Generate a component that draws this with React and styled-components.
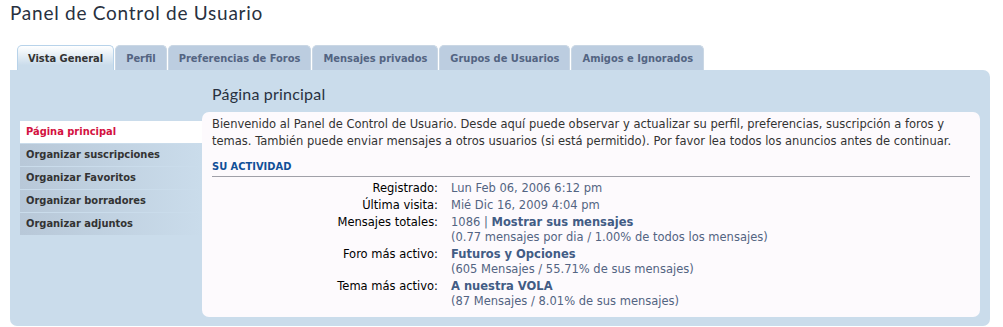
import React from 'react';
import styled, { createGlobalStyle } from 'styled-components';

const GlobalStyle = createGlobalStyle`
	body {
		margin: 0;
		background: #fff;
		font-family: 'DejaVu Sans', Verdana, sans-serif;
		font-size: 10px;
		color: #333;
	}
`;

const tabs = ['Vista General', 'Perfil', 'Preferencias de Foros', 'Mensajes privados', 'Grupos de Usuarios', 'Amigos e Ignorados'];
const menu = ['Página principal', 'Organizar suscripciones', 'Organizar Favoritos', 'Organizar borradores', 'Organizar adjuntos'];

const App = () => {
	return (
		<Page>
			<GlobalStyle />
			<Title>Panel de Control de Usuario</Title>
			<TabBar>
				{tabs.map((t, i) => (
					<Tab key={t} active={i === 0}>{t}</Tab>
				))}
			</TabBar>
			<Panel>
				<Heading>Página principal</Heading>
				<Menu>
					{menu.map((m, i) => (
						<MenuItem key={m} active={i === 0}>{m}</MenuItem>
					))}
				</Menu>
				<Content>
					<Intro>
						Bienvenido al Panel de Control de Usuario. Desde aquí puede observar y actualizar su perfil, preferencias, suscripción a foros y
						temas. También puede enviar mensajes a otros usuarios (si está permitido). Por favor lea todos los anuncios antes de continuar.
					</Intro>
					<SectionTitle>SU ACTIVIDAD</SectionTitle>
					<Stats>
						<dt>Registrado:</dt>
						<dd>Lun Feb 06, 2006 6:12 pm</dd>
						<dt>Última visita:</dt>
						<dd>Mié Dic 16, 2009 4:04 pm</dd>
						<dt>Mensajes totales:</dt>
						<dd>
							1086 | <StatLink>Mostrar sus mensajes</StatLink>
							<br />(0.77 mensajes por dia / 1.00% de todos los mensajes)
						</dd>
						<dt>Foro más activo:</dt>
						<dd>
							<StatLink>Futuros y Opciones</StatLink>
							<br />(605 Mensajes / 55.71% de sus mensajes)
						</dd>
						<dt>Tema más activo:</dt>
						<dd>
							<StatLink>A nuestra VOLA</StatLink>
							<br />(87 Mensajes / 8.01% de sus mensajes)
						</dd>
					</Stats>
				</Content>
			</Panel>
		</Page>
	);
};

const Page = styled.div`
	padding: 0 13px 0 10px;
`;

const Title = styled.h2`
	font-family: Lato, 'Liberation Sans', sans-serif;
	font-weight: normal;
	font-size: 19px;
	letter-spacing: 0.75px;
	line-height: 26px;
	color: #28313f;
	margin: 0;
	height: 45px;
`;

const TabBar = styled.ul`
	display: flex;
	list-style: none;
	margin: 0;
	padding: 0 0 0 7px;
	height: 25px;
`;

const Tab = styled.li`
	display: flex;
	align-items: center;
	padding: 0 10px;
	margin-right: 1px;
	border-radius: 5px 5px 0 0;
	border: 1px solid ${(p) => (p.active ? '#b8d3ea' : '#cad7e4')};
	border-bottom: none;
	background: ${(p) => (p.active ? 'linear-gradient(#ffffff, #cadceb 80%)' : '#bccde0')};
	font-family: 'DejaVu Sans Condensed', 'DejaVu Sans', sans-serif;
	font-size: 11px;
	font-weight: bold;
	color: ${(p) => (p.active ? '#333' : '#536482')};
	white-space: nowrap;
`;

const Panel = styled.div`
	display: grid;
	grid-template-columns: 182px 1fr;
	grid-template-rows: auto auto;
	background: #cadceb;
	border-radius: 0 7px 7px 7px;
	padding: 0 10px 9px 10px;
`;

const Heading = styled.h2`
	grid-column: 2;
	margin: 0;
	padding: 13px 0 0 10px;
	height: 29px;
	font-family: Lato, 'Liberation Sans', sans-serif;
	font-weight: normal;
	font-size: 16px;
	letter-spacing: 0.2px;
	line-height: 22px;
	color: #28313f;
`;

const Menu = styled.ul`
	grid-column: 1;
	list-style: none;
	margin: 9px 0 0;
	padding: 0;
`;

const MenuItem = styled.li`
	height: 22px;
	line-height: 22px;
	padding-left: 6px;
	margin-bottom: 1px;
	font-family: 'DejaVu Sans Condensed', 'DejaVu Sans', sans-serif;
	font-size: 11px;
	font-weight: bold;
	color: ${(p) => (p.active ? '#d31141' : '#333')};
	background: ${(p) => (p.active ? '#fff' : 'linear-gradient(to right, #b8c8d8, #cadceb)')};
	white-space: nowrap;
`;

const Content = styled.div`
	grid-column: 2;
	background: #fdfafd;
	border-radius: 7px;
	padding: 4px 10px 8px;
`;

const Intro = styled.p`
	margin: 0;
	font-size: 11.5px;
	line-height: 17px;
	color: #333;
`;

const SectionTitle = styled.h3`
	margin: 9px 0 0;
	padding-bottom: 2px;
	border-bottom: 1px solid #a0a0a8;
	font-family: 'DejaVu Sans Condensed', 'DejaVu Sans', sans-serif;
	font-size: 11px;
	line-height: 15px;
	font-weight: bold;
	color: #115098;
`;

const Stats = styled.dl`
	display: grid;
	grid-template-columns: 226px 1fr;
	column-gap: 13px;
	row-gap: 2px;
	margin: 4px 0 0;
	font-size: 11.5px;
	line-height: 15px;
	dt {
		text-align: right;
		color: #000;
	}
	dd {
		margin: 0;
		color: #536482;
	}
`;

const StatLink = styled.a`
	font-weight: bold;
	color: #425c85;
`;

export default App;
